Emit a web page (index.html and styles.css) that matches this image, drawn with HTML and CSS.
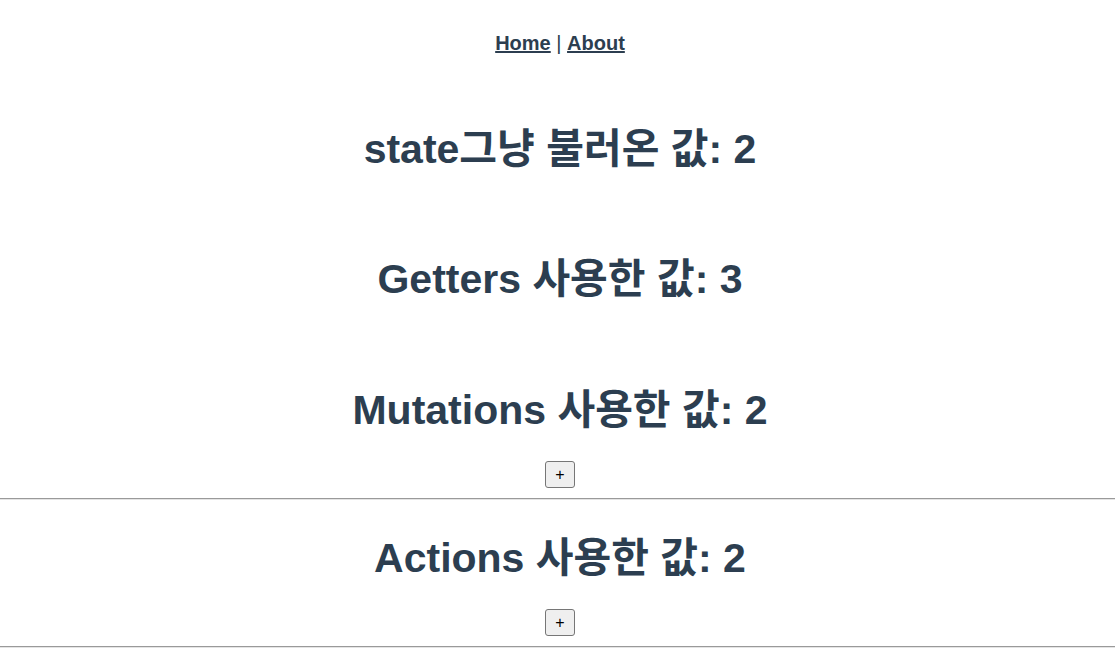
FILE: index.html
```
<!DOCTYPE html>
<html lang="ko">
<head>
<meta charset="utf-8">
<title>Vuex</title>
<link rel="stylesheet" href="styles.css">
</head>
<body>
<div class="app">
  <nav class="nav"><a class="nav-link" href="#">Home</a> | <a class="nav-link" href="#">About</a></nav>
  <main class="home">
    <h1 class="title">state그냥 불러온 값: 2</h1>
    <h1 class="title title-next">Getters 사용한 값: 3</h1>
    <section class="block block-mutations">
      <h1 class="title">Mutations 사용한 값: 2</h1>
      <div class="btn-row"><button class="btn" type="button">+</button></div>
      <hr class="rule">
    </section>
    <section class="block block-actions">
      <h1 class="title">Actions 사용한 값: 2</h1>
      <div class="btn-row"><button class="btn" type="button">+</button></div>
      <hr class="rule rule-last">
    </section>
  </main>
</div>
</body>
</html>
```

FILE: styles.css
```
html, body {
  margin: 0;
  padding: 0;
  background: #ffffff;
}

.app {
  font-family: "Liberation Sans", Arial, "Noto Sans CJK KR", sans-serif;
  color: #2c3e50;
  text-align: center;
}

.nav {
  padding-top: 32px;
  padding-left: 5px;
  font-size: 20px;
  line-height: 23px;
  height: 23px;
}

.nav-link {
  color: #2c3e50;
  font-weight: bold;
  text-decoration: underline;
}

.home {
  padding-top: 71px;
}

.title {
  margin: 0;
  padding-left: 5px;
  font-size: 41px;
  line-height: 46px;
  font-weight: bold;
}

.title-next {
  margin-top: 84px;
}

.block-mutations {
  margin-top: 85px;
}

.block-actions {
  margin-top: 35px;
}

.btn-row {
  margin-top: 28px;
  padding-left: 5px;
  height: 27px;
  display: flex;
  justify-content: center;
}

.btn {
  width: 30px;
  height: 27px;
  padding: 0;
  font-family: "Liberation Sans", Arial, sans-serif;
  font-size: 16px;
  line-height: 1;
  color: #000000;
  background: #efefef;
  border: 1px solid #767676;
  border-radius: 3px;
}

.rule {
  margin: 10px 0 0;
  height: 0;
  border: 0;
  border-top: 1px solid #9a9a9a;
  border-bottom: 1px solid #e4e4e4;
}
```
